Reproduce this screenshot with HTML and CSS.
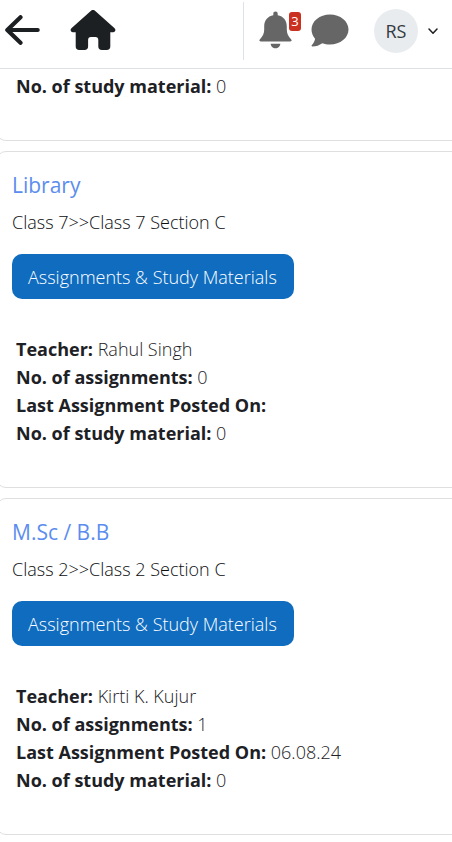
FILE: index.html
```html
<!DOCTYPE html>
<html lang="en">
<head>
<meta charset="utf-8">
<meta name="viewport" content="width=device-width, initial-scale=1">
<title>Courses</title>
<link rel="stylesheet" href="styles.css">
</head>
<body>
<header class="topbar">
  <nav class="nav">
    <button class="icon-btn" type="button" aria-label="Back">
      <svg width="36" height="30" viewBox="0 0 36 30" fill="none" stroke="#1d2022" stroke-width="4.2" stroke-linecap="round" stroke-linejoin="round"><path d="M15.500 2.200 2.300 15 15.500 27.800M3 15H32.700"/></svg>
    </button>
    <a class="icon-btn" href="#" aria-label="Home">
      <svg width="46" height="40" viewBox="0 0 46 40" fill="#1d2022"><path d="M21.3.6a2.6 2.6 0 0 1 3.4 0L44.600 18.200c1.600 1.600.700 4.100-1.500 4.100H40.300V36.500c0 2.200-1.300 3.500-3.500 3.500H31.800c-2.200 0-3.500-1.300-3.500-3.500V30c0-1.900-1-2.900-2.900-2.900H21c-1.900 0-2.900 1-2.900 2.900v6.500c0 2.200-1.300 3.500-3.500 3.500H9.200C7 40 5.700 38.700 5.700 36.500V22.300H2.900C.7 22.300-.200 19.800 1.400 18.200Z"/></svg>
    </a>
  </nav>
  <div class="tools">
    <button class="icon-btn" type="button" aria-label="Notifications">
      <svg width="33" height="38" viewBox="0 0 33 38" fill="#666"><path d="M16.500.5c1.300 0 2.200.9 2.200 2.200v1.500c5.700 1 9.100 5.200 9.100 11.200v3.400c0 3.500 1.300 6.300 4.400 9.600.9 1 .3 2-.9 2H1.700c-1.200 0-1.800-1-.9-2 3.100-3.300 4.400-6.100 4.400-9.600v-3.400c0-6 3.400-10.200 9.100-11.200V2.700c0-1.300.9-2.200 2.200-2.200ZM11.700 32.700h9.600c0 2.600-2.200 4.500-4.800 4.500s-4.800-1.900-4.800-4.500Z"/></svg>
      <span class="badge">3</span>
    </button>
    <button class="icon-btn" type="button" aria-label="Messages">
      <svg width="38" height="33" viewBox="0 0 38 33" fill="#666"><path d="M19 .5c10.300 0 18.500 6.700 18.500 15S29.300 30.500 19 30.500c-2.800 0-5.400-.5-7.700-1.300C8.400 31.200 5.100 32.500 1.500 32.500c-1 0-1.200-.9-.6-1.500 1.500-1.600 2.800-4 3.200-6.300C1.900 22.100.5 19 .5 15.500.500 7.200 8.700.500 19 .500Z"/></svg>
    </button>
    <button class="user" type="button" aria-label="User menu">
      <span class="avatar">RS</span>
      <svg width="10" height="7" viewBox="0 0 10 7" fill="none" stroke="#1d2022" stroke-width="1.500" stroke-linecap="round" stroke-linejoin="round"><path d="m1 1 4 4.300L9 1"/></svg>
    </button>
  </div>
</header>
<main class="courses">
  <article class="card card-tail">
    <ul class="facts">
      <li><b>No. of study material:</b> 0</li>
    </ul>
  </article>
  <article class="card">
    <h2 class="title"><a href="#">Library</a></h2>
    <p class="section">Class 7&gt;&gt;Class 7 Section C</p>
    <button class="action" type="button">Assignments &amp; Study Materials</button>
    <ul class="facts">
      <li><b>Teacher:</b> Rahul Singh</li>
      <li><b>No. of assignments:</b> 0</li>
      <li><b>Last Assignment Posted On:</b></li>
      <li><b>No. of study material:</b> 0</li>
    </ul>
  </article>
  <article class="card">
    <h2 class="title"><a href="#">M.Sc / B.B</a></h2>
    <p class="section">Class 2&gt;&gt;Class 2 Section C</p>
    <button class="action" type="button">Assignments &amp; Study Materials</button>
    <ul class="facts">
      <li><b>Teacher:</b> Kirti K. Kujur</li>
      <li><b>No. of assignments:</b> 1</li>
      <li><b>Last Assignment Posted On:</b> 06.08.24</li>
      <li><b>No. of study material:</b> 0</li>
    </ul>
  </article>
</main>
</body>
</html>
```
FILE: styles.css
```css
* { box-sizing: border-box; }

body {
  margin: 0;
  background: #fff;
  color: #1d2125;
  font: 300 18px/28px "Open Sans", "Noto Sans", sans-serif;
}

button {
  padding: 0;
  border: 0;
  background: none;
  color: inherit;
  font: inherit;
  cursor: pointer;
}

svg { display: block; }

.topbar {
  display: flex;
  justify-content: space-between;
  padding: 2px 14px 8px 5px;
  border-bottom: 1px solid #dee2e6;
}

.nav,
.tools,
.user {
  display: flex;
  align-items: center;
}

.nav { gap: 29px; }

.tools {
  gap: 19px;
  padding-left: 15px;
  border-left: 1px solid #dee2e6;
}

.icon-btn {
  position: relative;
  padding-bottom: 2px;
}

.badge {
  position: absolute;
  top: 1px;
  left: 30px;
  width: 12px;
  border-radius: 3px;
  background: #ca3120;
  color: #fff;
  font-size: 13px;
  font-weight: 400;
  line-height: 19px;
  text-align: center;
}

.user {
  gap: 10px;
  margin-left: 6px;
  min-height: 58px;
}

.avatar {
  width: 44px;
  border-radius: 50%;
  background: #e9ecef;
  color: #343a40;
  font-weight: 400;
  line-height: 44px;
  text-align: center;
}

.courses {
  display: grid;
  gap: 10px;
  overflow: hidden;
}

.card {
  margin: 0 -12px 0 -4px;
  padding: 16px 15px 40px;
  border: 1px solid #dfdfdf;
  border-radius: 10px;
}

.card-tail {
  padding-top: 3px;
  border-top: 0;
  border-top-left-radius: 0;
}

.title {
  margin: 0 0 6px;
  font-size: 21px;
  font-weight: 400;
  line-height: 34px;
}

.title a {
  color: #5b8def;
  text-decoration: none;
}

.section {
  margin: 0 0 17px;
  color: #0b0d0f;
}

.action {
  display: block;
  margin-bottom: 36px;
  padding: 9px 17px 8px 16px;
  border-radius: 10px;
  background: #0f6cbf;
  color: #fff;
}

.title + .section + .action { margin-top: 18px; }

.facts {
  margin: 0;
  padding: 0 4px;
  list-style: none;
}

.facts b { font-weight: 700; }
```
